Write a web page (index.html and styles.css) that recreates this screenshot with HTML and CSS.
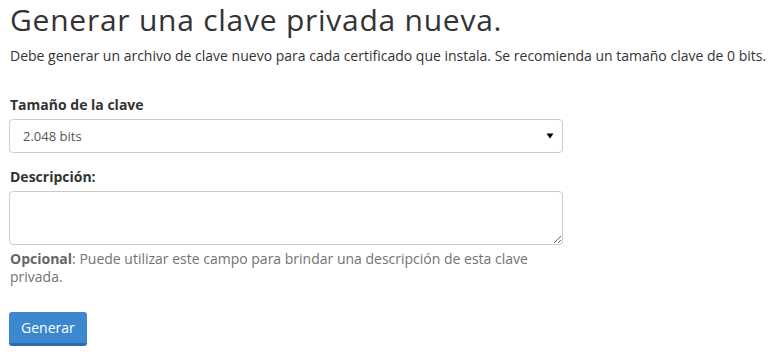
FILE: index.html
```html
<!DOCTYPE html>
<html lang="es">
<head>
<meta charset="utf-8">
<title>Generar una clave privada nueva.</title>
<link rel="stylesheet" href="styles.css">
</head>
<body>
<main class="page">
  <h1 class="title">Generar una clave privada nueva.</h1>
  <p class="intro">Debe generar un archivo de clave nuevo para cada certificado que instala. Se recomienda un tamaño clave de 0 bits.</p>
  <form class="key-form">
    <div class="form-group">
      <label class="field-label" for="keysize">Tamaño de la clave</label>
      <div class="select-wrap">
        <select id="keysize" class="control select">
          <option>2.048 bits</option>
          <option>4.096 bits</option>
        </select>
        <svg class="caret" width="8" height="6" viewBox="0 0 8 6" aria-hidden="true"><path d="M0.5 0.5 H7.5 L4 5.5 Z" fill="#000"/></svg>
      </div>
    </div>
    <div class="form-group form-group-last">
      <label class="field-label" for="desc">Descripción:</label>
      <textarea id="desc" class="control textarea"></textarea>
      <p class="help"><strong>Opcional</strong>: Puede utilizar este campo para brindar una descripción de esta clave privada.</p>
    </div>
    <button type="button" class="btn-primary">Generar</button>
  </form>
</main>
</body>
</html>
```
FILE: styles.css
```css
html, body {
  margin: 0;
  padding: 0;
  background: #fff;
}
body {
  font-family: "Open Sans", "Liberation Sans", sans-serif;
  font-size: 14px;
  line-height: 20px;
  color: #333;
}
.page {
  padding: 0 0 0 10px;
}
.title {
  margin: 3px 0 0;
  font-size: 30px;
  line-height: 33px;
  letter-spacing: 0.75px;
  font-weight: 400;
  color: #333;
}
.intro {
  margin: 10px 0 29px;
  white-space: nowrap;
}
.key-form {
  width: 554px;
  margin-left: -1px;
}
.form-group {
  margin-bottom: 14px;
}
.form-group-last {
  margin-bottom: 26px;
}
.field-label {
  display: block;
  font-weight: 700;
  margin: 0 0 4px 1px;
}
.control {
  display: block;
  box-sizing: border-box;
  width: 100%;
  border: 1px solid #ccc;
  border-radius: 4px;
  background: #fff;
  font-family: "Open Sans", "Liberation Sans", sans-serif;
  font-size: 13px;
  color: #555;
  margin: 0;
}
.select-wrap {
  position: relative;
}
.select {
  height: 34px;
  padding: 0 12px 0 13px;
  appearance: none;
  -webkit-appearance: none;
}
.caret {
  position: absolute;
  right: 9px;
  top: 14px;
}
.textarea {
  height: 54px;
  padding: 6px 12px;
  resize: vertical;
}
.help {
  margin: 5px 0 0;
  color: #737373;
  padding-left: 1px;
  line-height: 18px;
}
.help strong {
  color: #666;
}
.btn-primary {
  display: block;
  height: 34px;
  box-sizing: border-box;
  padding: 0 12px;
  border: 0;
  border-bottom: 3px solid #2d6ca8;
  border-radius: 3px;
  background: #3b88cf;
  color: #fff;
  font-family: "Open Sans", "Liberation Sans", sans-serif;
  font-size: 14px;
  line-height: 31px;
}
```
